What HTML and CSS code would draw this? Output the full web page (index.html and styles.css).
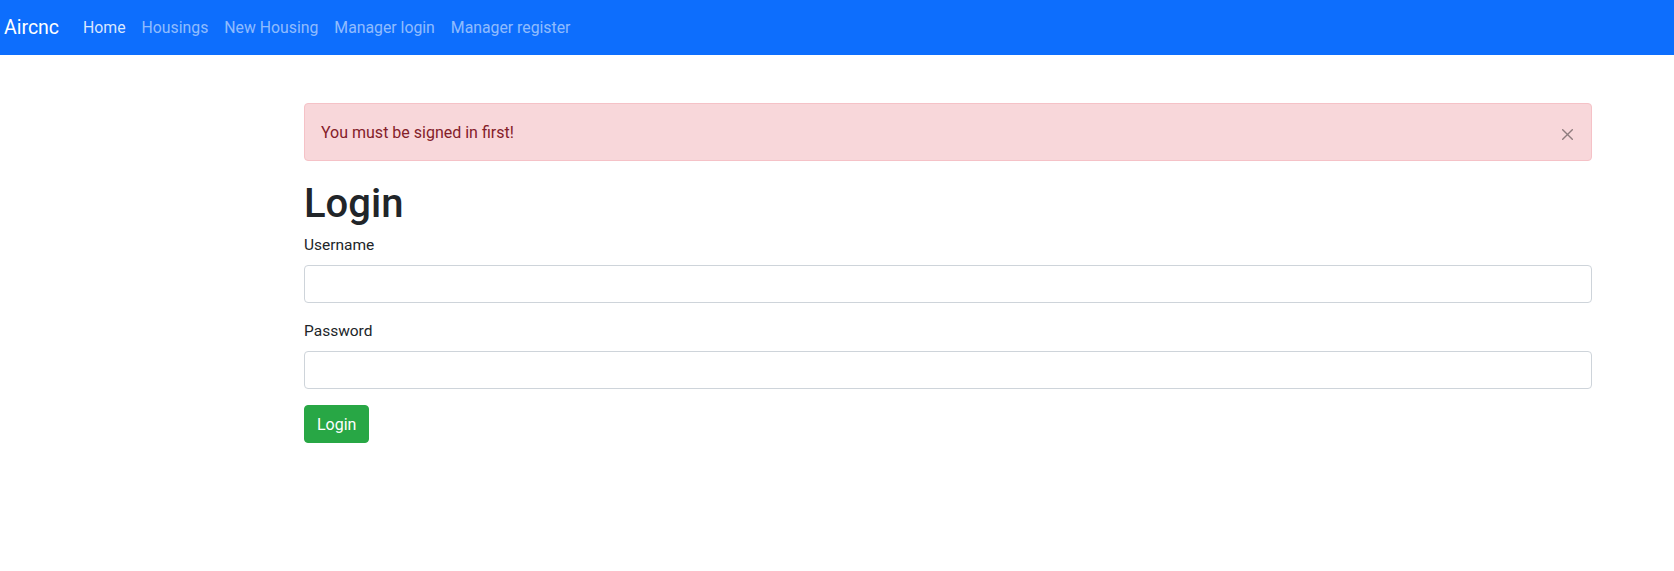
FILE: index.html
```html
<!DOCTYPE html>
<html lang="en">
<head>
<meta charset="utf-8">
<title>Aircnc - Login</title>
<link rel="stylesheet" href="styles.css">
</head>
<body>
<nav class="navbar">
  <a class="brand" href="#">Aircnc</a>
  <ul class="nav">
    <li><a class="nav-link active" href="#">Home</a></li>
    <li><a class="nav-link" href="#">Housings</a></li>
    <li><a class="nav-link" href="#">New Housing</a></li>
    <li><a class="nav-link" href="#">Manager login</a></li>
    <li><a class="nav-link" href="#">Manager register</a></li>
  </ul>
</nav>
<main class="main">
  <div class="alert">
    <span>You must be signed in first!</span>
    <button class="btn-close" type="button" aria-label="Close">
      <svg viewBox="0 0 16 16" width="11" height="11"><path d="M.293.293a1 1 0 011.414 0L8 6.586 14.293.293a1 1 0 111.414 1.414L9.414 8l6.293 6.293a1 1 0 01-1.414 1.414L8 9.414l-6.293 6.293a1 1 0 01-1.414-1.414L6.586 8 .293 1.707a1 1 0 010-1.414z" fill="currentColor"/></svg>
    </button>
  </div>
  <h1 class="title">Login</h1>
  <form class="form">
    <div class="field">
      <label class="label" for="username">Username</label>
      <input class="input" id="username" type="text">
    </div>
    <div class="field">
      <label class="label" for="password">Password</label>
      <input class="input" id="password" type="password">
    </div>
    <div><button class="btn-success" type="button">Login</button></div>
  </form>
</main>
</body>
</html>
```
FILE: styles.css
```css
* { box-sizing: border-box; }
body {
  margin: 0;
  font-family: Roboto, "Noto Sans", sans-serif;
  font-size: 16px;
  line-height: 24px;
  color: #212529;
  background: #fff;
}
.navbar {
  display: flex;
  align-items: center;
  height: 55px;
  padding: 0 4px;
  background: #0d6efd;
}
.brand {
  font-size: 19.5px;
  line-height: 30px;
  color: #fff;
  text-decoration: none;
  margin-right: 16px;
}
.nav {
  display: flex;
  list-style: none;
  margin: 0;
  padding: 0;
}
.nav-link {
  display: block;
  padding: 8px 8px;
  color: rgba(255,255,255,.55);
  text-decoration: none;
  font-size: 15.8px;
}
.nav-link.active { color: rgba(255,255,255,.85); }
.main {
  padding: 48px 82px 0 304px;
}
.alert {
  position: relative;
  padding: 17px 16px 15px;
  border: 1px solid #f5c2c7;
  border-radius: 4px;
  background: #f8d7da;
  color: #842029;
  margin-bottom: 16px;
  height: 58px;
}
.btn-close {
  position: absolute;
  top: 0;
  right: 0;
  width: 48px;
  height: 60px;
  padding: 0;
  border: 0;
  background: transparent;
  color: #000;
  opacity: .42;
  display: flex;
  align-items: center;
  justify-content: center;
}
.btn-close svg { display: block; }
.title {
  margin: 0 0 5px;
  padding-top: 3px;
  font-size: 40px;
  line-height: 48px;
  font-weight: 500;
}
.field { margin-bottom: 16px; }
.label {
  display: block;
  margin-bottom: 8px;
  font-size: 15.5px;
}
.input {
  display: block;
  width: 100%;
  height: 38px;
  border: 1px solid #ced4da;
  border-radius: 4px;
  background: #fff;
  font: inherit;
}
.btn-success {
  height: 38px;
  padding: 0 12px;
  border: 1px solid #28a745;
  border-radius: 4px;
  background: #28a745;
  color: #fff;
  font-family: inherit;
  font-size: 16px;
}
```
